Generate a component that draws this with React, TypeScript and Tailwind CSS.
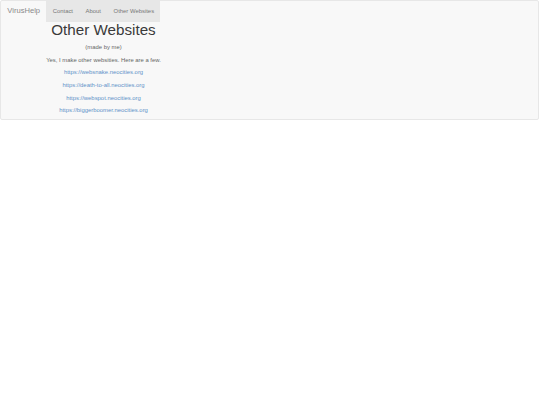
const links = [
  'https://websnake.neocities.org',
  'https://death-to-all.neocities.org',
  'https://webspot.neocities.org',
  'https://biggerboomer.neocities.org',
];

export default function App() {
  return (
    <div className="min-h-[405px] bg-white font-['Liberation_Sans',Arial,sans-serif] text-[#333]">
      <div className="w-[539px] bg-[#f8f8f8] border border-[#e7e7e7] rounded-[2px]">
        {/* Navbar */}
        <div className="flex h-[21px]">
          <a className="px-[6.3px] py-[6.3px] text-[7.6px] leading-[8.44px] text-[#8a8a8a]">VirusHelp</a>
          <ul className="flex bg-[#e7e7e7]">
            <li><a className="block px-[6.3px] py-[6.3px] text-[5.9px] leading-[8.44px] text-[#777]">Contact</a></li>
            <li><a className="block px-[6.3px] py-[6.3px] text-[5.9px] leading-[8.44px] text-[#777]">About</a></li>
            <li><a className="block px-[6.3px] py-[6.3px] text-[5.9px] leading-[8.44px] text-[#777]">Other Websites</a></li>
          </ul>
        </div>

        {/* Content */}
        <div className="w-[205px] text-center">
          <h1 className="text-[15.2px] leading-[16.7px] mb-[4.2px] text-[#3a3a3a]">Other Websites</h1>
          <p className="text-[5.9px] leading-[8.44px] mb-[4.22px] text-[#666]">(made by me)</p>
          <p className="text-[5.9px] leading-[8.44px] mb-[4.22px] text-[#666]">Yes, I make other websities. Here are a few.</p>
          {links.map(l => (
            <p key={l} className="text-[5.9px] leading-[8.44px] mb-[4.22px]">
              <a href={l} className="text-[#5f92c8]">{l}</a>
            </p>
          ))}
        </div>
      </div>
    </div>
  );
}
